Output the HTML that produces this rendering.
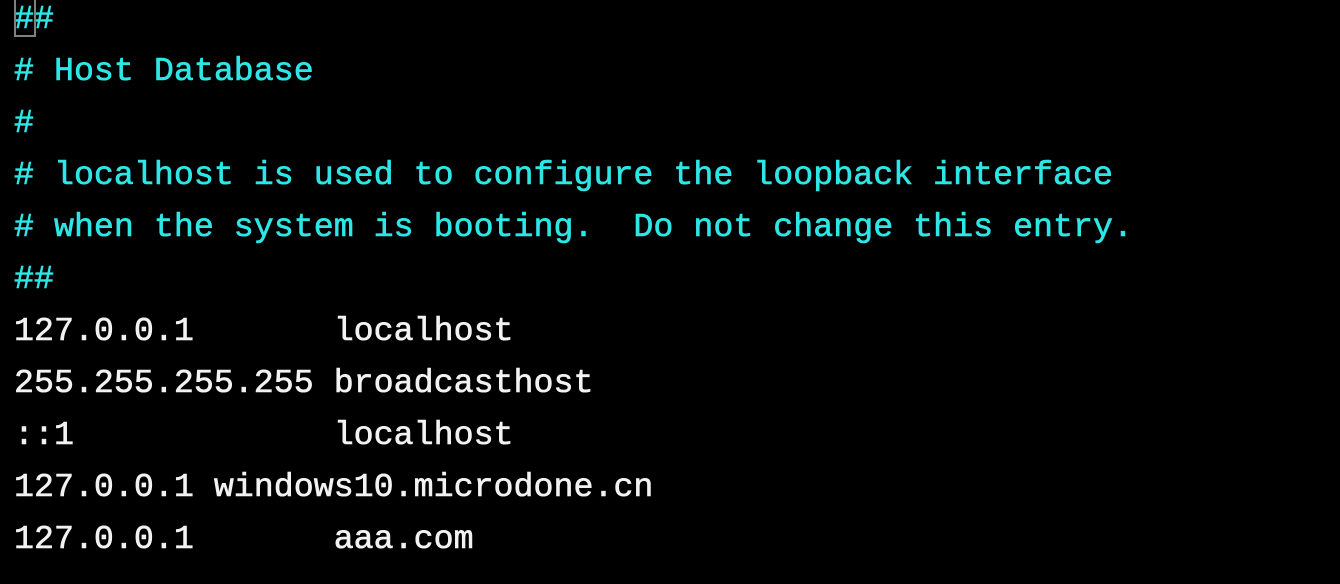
<!DOCTYPE html>
<html><head><style>
html,body{margin:0;background:#000;width:1340px;height:584px;overflow:hidden}
pre{position:absolute;left:14px;top:-7px;margin:0;font-family:"Liberation Mono",monospace;font-size:33.3px;line-height:52px;color:#f2f2f2;letter-spacing:0;-webkit-text-stroke:0.6px currentColor}
.c{color:#2ee6e6}
.cur{position:absolute;left:14px;top:0;width:18px;height:35px;border:2px solid #808080;border-top:none}
</style></head><body>
<pre><span class="c">##
# Host Database
#
# localhost is used to configure the loopback interface
# when the system is booting.  Do not change this entry.
##</span>
127.0.0.1       localhost
255.255.255.255 broadcasthost
::1             localhost
127.0.0.1 windows10.microdone.cn
127.0.0.1       aaa.com</pre>
<div class="cur"></div>
</body></html>
